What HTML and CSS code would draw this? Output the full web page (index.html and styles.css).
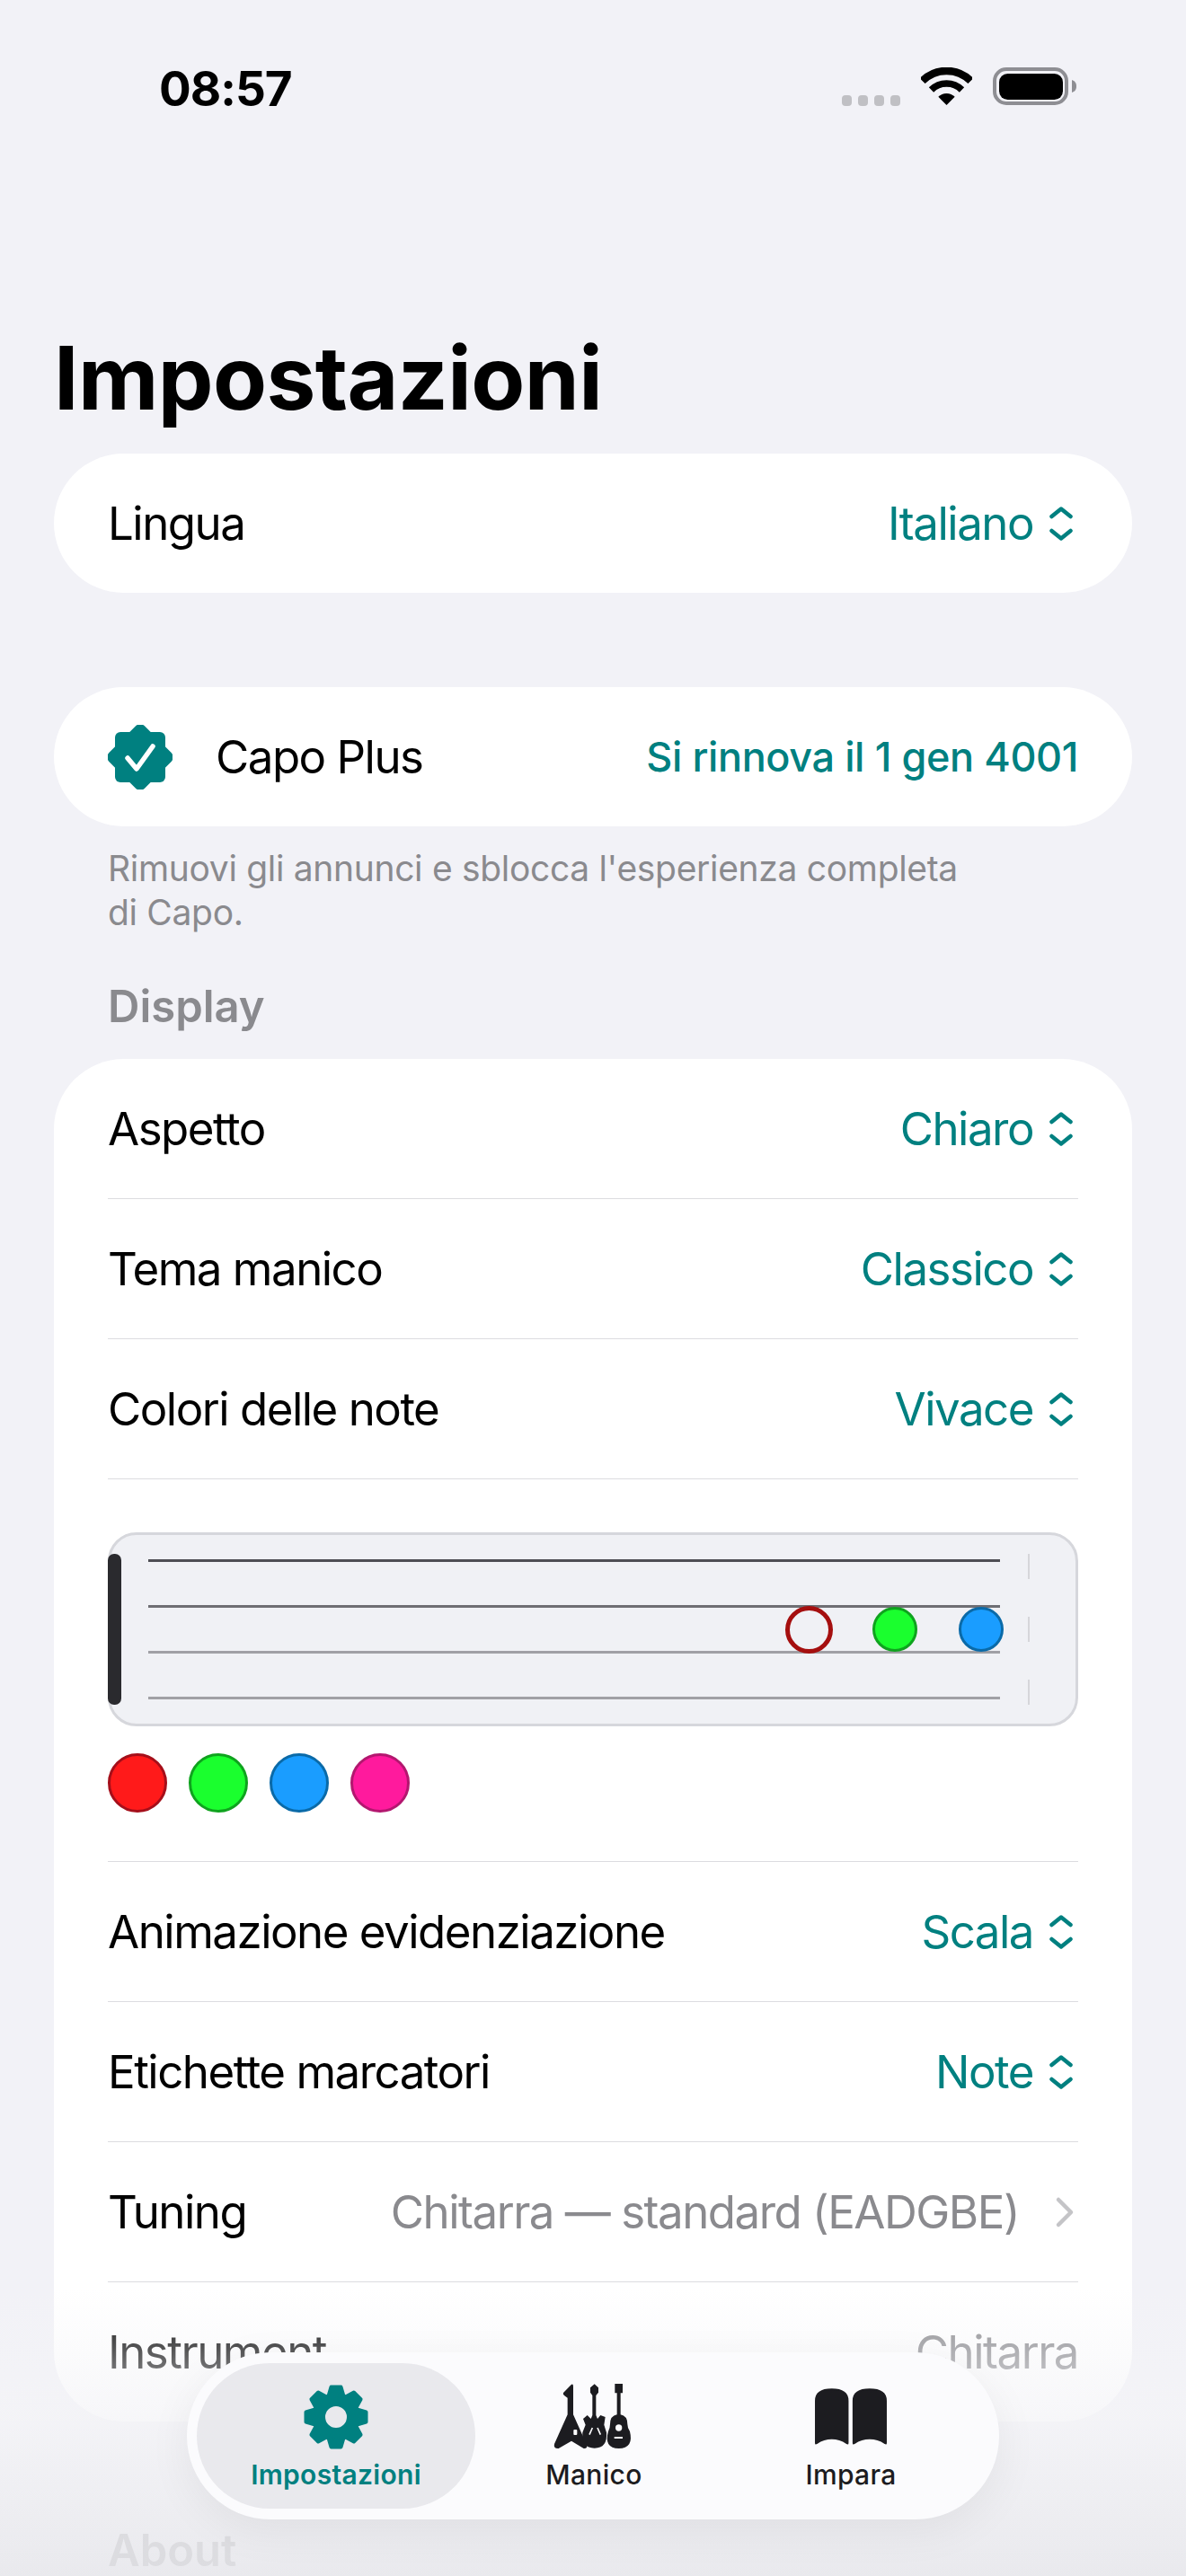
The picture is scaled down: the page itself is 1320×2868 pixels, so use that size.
FILE: index.html
```html
<!doctype html>
<html lang="it">
<head>
<meta charset="UTF-8">
<title>Impostazioni</title>
<link rel="stylesheet" href="styles.css">
</head>
<body>
<svg class="defs" width="0" height="0">
	<symbol id="updown" viewBox="0 0 26 38"><path d="M2.5 11 13 2.5 23.5 11M2.5 27 13 35.5 23.5 27" fill="none" stroke="currentColor" stroke-width="4.5" stroke-linecap="round" stroke-linejoin="round"/></symbol>
</svg>
<div class="screen">
	<!-- status bar -->
	<div class="status">
		<span class="time">08:57</span>
		<div class="status-right">
			<div class="dots"><i></i><i></i><i></i><i></i></div>
			<svg class="wifi" width="57" height="42" viewBox="0 0 57 42"><path d="M1.6 15.1A38 38 0 0 1 55.4 15.1" fill="none" stroke="#000" stroke-width="8.5"/><path d="M11.5 25A24 24 0 0 1 45.5 25" fill="none" stroke="#000" stroke-width="7.5"/><path d="M28.5 42 19.3 32.8A13 13 0 0 1 37.7 32.8Z"/></svg>
			<svg class="battery" width="93" height="42" viewBox="0 0 93 42"><rect x="2" y="2" width="80" height="38" rx="13" fill="none" stroke="#8e8e93" stroke-width="4"/><rect x="7" y="7" width="71" height="29" rx="9.5"/><path d="M88 14c3 1 5 3 5 7s-2 6-5 7Z" fill="#8e8e93"/></svg>
		</div>
	</div>

	<h1 class="title">Impostazioni</h1>

	<div class="card">
		<div class="row">
			<span class="label">Lingua</span>
			<span class="value">Italiano<svg class="updown"><use href="#updown"/></svg></span>
		</div>
	</div>

	<div class="card card-plus">
		<div class="row">
			<span class="plus-name">
				<svg class="seal" width="72" height="72" viewBox="0 0 72 72"><rect x="8" y="8" width="56" height="56" rx="6" fill="#008080"/><rect x="8" y="8" width="56" height="56" rx="7" fill="#008080" transform="rotate(45 36 36)"/><path d="M22 37 32 49 50 24" fill="none" stroke="#fff" stroke-width="5.5" stroke-linecap="round" stroke-linejoin="round"/></svg>
				<span class="label">Capo Plus</span>
			</span>
			<span class="renew">Si rinnova il 1 gen 4001</span>
		</div>
	</div>
	<p class="note">Rimuovi gli annunci e sblocca l'esperienza completa<br>di Capo.</p>

	<h2 class="section-title">Display</h2>
	<div class="card">
		<div class="row">
			<span class="label">Aspetto</span>
			<span class="value">Chiaro<svg class="updown"><use href="#updown"/></svg></span>
		</div>
		<div class="row">
			<span class="label">Tema manico</span>
			<span class="value">Classico<svg class="updown"><use href="#updown"/></svg></span>
		</div>
		<div class="row">
			<span class="label">Colori delle note</span>
			<span class="value">Vivace<svg class="updown"><use href="#updown"/></svg></span>
		</div>
		<div class="row-preview">
			<div class="board">
				<div class="nut"></div>
				<div class="strings"><i></i><i></i><i></i><i></i></div>
				<div class="fret fret-1"></div>
				<div class="fret fret-2"></div>
				<div class="fret fret-3"></div>
				<div class="dot dot-ring"></div>
				<div class="dot dot-green"></div>
				<div class="dot dot-blue"></div>
			</div>
			<div class="swatches">
				<div class="swatch sw-red"></div>
				<div class="swatch sw-green"></div>
				<div class="swatch sw-blue"></div>
				<div class="swatch sw-pink"></div>
			</div>
		</div>
		<div class="row">
			<span class="label">Animazione evidenziazione</span>
			<span class="value">Scala<svg class="updown"><use href="#updown"/></svg></span>
		</div>
		<div class="row">
			<span class="label">Etichette marcatori</span>
			<span class="value">Note<svg class="updown"><use href="#updown"/></svg></span>
		</div>
		<div class="row">
			<span class="label">Tuning</span>
			<span class="value value-gray">Chitarra — standard (EADGBE)<svg class="chev" width="22" height="36" viewBox="0 0 22 36"><path d="M4 4 18 18 4 32" fill="none" stroke="#c4c4c7" stroke-width="4.5" stroke-linecap="round" stroke-linejoin="round"/></svg></span>
		</div>
		<div class="row">
			<span class="label">Instrument</span>
			<span class="value value-gray">Chitarra</span>
		</div>
	</div>

	<h2 class="section-title section-about">About</h2>

	<!-- fade under the tab bar -->
	<div class="fade"></div>

	<div class="tabbar">
		<div class="tab tab-on">
			<svg width="76" height="76" viewBox="-38 -38 76 76"><defs><path id="tooth" d="M-8-25-5.5-33.5H5.500L8-25Z" stroke="#008080" stroke-width="4" stroke-linejoin="round" fill="#008080"/></defs><circle r="19.500" fill="none" stroke="#008080" stroke-width="15"/><use href="#tooth"/><use href="#tooth" transform="rotate(45)"/><use href="#tooth" transform="rotate(90)"/><use href="#tooth" transform="rotate(135)"/><use href="#tooth" transform="rotate(180)"/><use href="#tooth" transform="rotate(225)"/><use href="#tooth" transform="rotate(270)"/><use href="#tooth" transform="rotate(315)"/></svg>
			<span>Impostazioni</span>
		</div>
		<div class="tab">
			<svg width="92" height="76" viewBox="72 72 276 228"><path d="M108 105 132 80Q141 72 141 84V178L186 278Q190 292 176 291L135 266 92 291Q74 292 78 276L122 178V122L112 115Q105 110 108 105Z" fill="#1c1c20"/><path d="M212 76 225 88V104L217 114V180L222 192 232 180 248 186 244 212 252 238Q256 290 212 290 168 290 172 238L182 212 174 192 188 180 200 192 205 180V114L198 104V88Z" fill="#1c1c20"/><path d="M280 75H306V106H299V178Q322 182 322 210 322 222 330 234 344 290 293 291 242 290 258 234 264 222 264 210 264 182 287 178V106H280Z" fill="#1c1c20"/><circle cx="293" cy="222" r="11" fill="#fbfbfd"/><rect x="278" y="252" width="28" height="6" fill="#fbfbfd"/><path d="M205 222 195 245M222 222 232 245" stroke="#fbfbfd" stroke-width="5" fill="none"/><rect x="142" y="228" width="12" height="18" rx="3" fill="#fbfbfd"/></svg>
			<span>Manico</span>
		</div>
		<div class="tab">
			<svg width="82" height="65" viewBox="82 88 241 190"><path d="M85 130Q85 90 140 90 195 90 195 130V268Q195 275 188 271 165 256 140 256 115 256 92 271 85 275 85 268ZM208 130Q208 90 264 90 320 90 320 130V268Q320 275 313 271 290 256 264 256 238 256 215 271 208 275 208 268Z" fill="#1c1c20"/></svg>
			<span>Impara</span>
		</div>
	</div>
</div>
</body>
</html>
```
FILE: styles.css
```css
html,body,div,h1,h2,p{
	margin:0;padding:0;
}
html,body{
	width:1320px;height:2868px;overflow:hidden;background:#f2f2f7;
}
body{
	font-family:"Inter","Liberation Sans",sans-serif;color:#000;
}
.defs{position:absolute;}
.screen{
	position:relative;width:1320px;height:2868px;overflow:hidden;
}

/* status bar */
.status{
	height:196px;padding:0 122px 0 177px;display:flex;justify-content:space-between;align-items:flex-start;box-sizing:border-box;
}
.time{
	font-size:53px;line-height:64px;font-weight:700;letter-spacing:-1px;margin-top:67px;
}
.status-right{
	display:flex;align-items:flex-start;margin-top:75px;
}
.dots{
	display:flex;gap:6.500px;margin-top:31px;margin-right:23px;
}
.dots i{
	display:block;width:11.500px;height:11.500px;border-radius:4px;background:#c0c0c4;
}
.wifi{margin-right:23px;}

/* heading */
.title{
	font-size:98px;line-height:120px;font-weight:700;letter-spacing:-.6px;padding-left:60px;margin-top:165px;height:144px;
}

/* cards */
.card{
	margin:0 60px;background:#fff;border-radius:78px;padding:0 60px;
}
.card-plus{margin-top:105px;}
.row{
	height:155px;display:flex;align-items:center;justify-content:space-between;border-bottom:1px solid #dcdce0;
}
.card > .row:last-child{border-bottom:0;}
.label{
	font-size:51px;letter-spacing:-1.5px;
}
.value{
	font-size:51px;letter-spacing:-1.5px;color:#008080;display:flex;align-items:center;
}
.value-gray{color:#8a8a8e;}
.updown{
	width:26px;height:38px;margin-left:18px;margin-right:6px;
}
.chev{margin-left:40px;margin-right:4px;}
.plus-name{
	display:flex;align-items:center;gap:48px;
}
.renew{
	font-size:45px;font-weight:500;letter-spacing:-.4px;color:#008080;
}
.note{
	font-size:39px;line-height:49px;letter-spacing:-.32px;color:#8a8a8e;padding:22px 60px 0 120px;
}
.section-title{
	font-size:49px;line-height:60px;font-weight:600;color:#8a8a8e;padding:0 0 0 120px;margin:51px 0 28px;
}
.section-about{
	line-height:50px;margin:119px 0 0;
}

/* fretboard preview */
.row-preview{
	padding:59px 0 54px;border-bottom:1px solid #dcdce0;
}
.board{
	position:relative;height:216px;box-sizing:border-box;background:#f0f1f5;border:3px solid #d6d7dc;border-radius:32px;
}
.nut{
	position:absolute;left:-3px;top:21px;width:15px;height:168px;border-radius:7px;background:#2a2a2e;
}
.strings{
	display:flex;flex-direction:column;gap:48px;padding:27px 84px 0 42px;
}
.strings i{
	display:block;height:3px;background:#a0a0a5;
}
.strings i:nth-child(1){background:#4e4e54;}
.strings i:nth-child(2){background:#6e6e73;}
.fret{
	position:absolute;left:1021px;width:2px;height:28px;background:#d6d6da;
}
.fret-1{top:21px;}
.fret-2{top:91px;}
.fret-3{top:161px;}
.dot{
	position:absolute;top:80px;width:50px;height:50px;box-sizing:border-box;border-radius:50%;border:3px solid;
}
.dot-ring{left:751px;top:79px;width:53px;height:53px;border:5px solid #a50f0f;}
.dot-green{left:848px;background:#1aff2e;border-color:#0fa31e;}
.dot-blue{left:944px;background:#1a9dff;border-color:#0a6aa8;}
.swatches{
	display:flex;gap:24px;margin-top:30px;
}
.swatch{
	width:66px;height:66px;box-sizing:border-box;border-radius:50%;border:3px solid;
}
.sw-red{background:#ff1a1a;border-color:#a50f1a;}
.sw-green{background:#1aff2e;border-color:#0fa31e;}
.sw-blue{background:#1a9dff;border-color:#0a6aa8;}
.sw-pink{background:#ff1a9d;border-color:#b3176f;}

/* bottom fade */
.fade{
	position:absolute;left:0;right:0;bottom:0;height:320px;
	background:linear-gradient(to bottom,rgba(244,244,247,0) 0,rgba(244,244,247,.75) 45%,rgba(232,232,236,.88) 100%);
}

/* tab bar */
.tabbar{
	position:absolute;left:208px;top:2619px;width:904px;height:186px;box-sizing:border-box;padding:12px 11px;
	display:grid;grid-template-columns:310px 264px 308px;background:#fbfbfd;border-radius:93px;
	box-shadow:0 12px 50px rgba(0,0,0,.06);
}
.tab{
	display:flex;flex-direction:column;align-items:center;height:162px;box-sizing:border-box;padding-top:22px;
	font-size:30px;font-weight:500;letter-spacing:.3px;color:#1c1c20;
}
.tab svg{
	height:76px;flex:none;
}
.tab span{
	line-height:36px;margin-top:8px;
}
.tab-on{
	background:#e9e9ed;border-radius:81px;color:#008080;font-weight:600;
}
```
